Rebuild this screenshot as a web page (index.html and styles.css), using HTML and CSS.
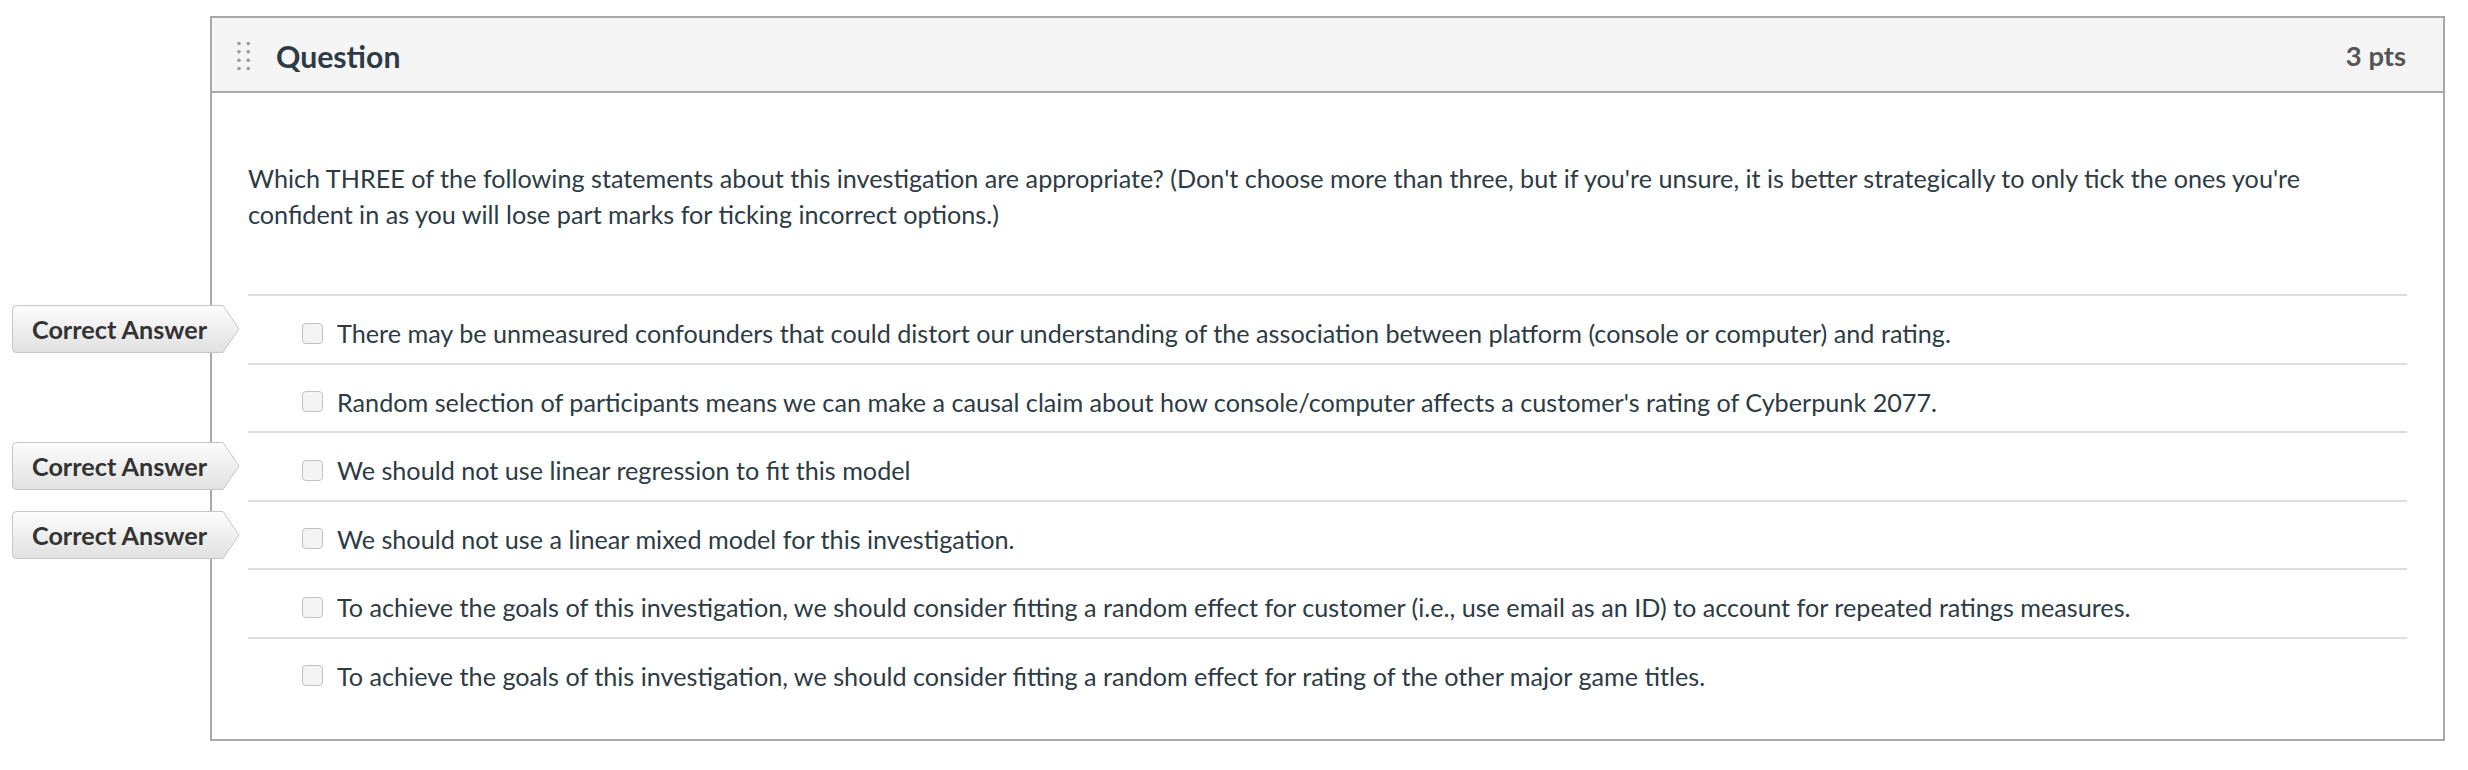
FILE: index.html
```html
<!DOCTYPE html>
<html lang="en">
<head>
<meta charset="utf-8">
<title>Question</title>
<link rel="stylesheet" href="styles.css">
</head>
<body>
<div class="page">
  <div class="question">
    <div class="q-header">
      <svg class="handle" width="16" height="32" viewBox="0 0 16 32" aria-hidden="true">
        <g fill="#9a9a9a">
          <circle cx="3" cy="3.5" r="1.8"/><circle cx="12.3" cy="3.5" r="1.8"/>
          <circle cx="3" cy="11.8" r="1.8"/><circle cx="12.3" cy="11.8" r="1.8"/>
          <circle cx="3" cy="20.2" r="1.8"/><circle cx="12.3" cy="20.2" r="1.8"/>
          <circle cx="3" cy="28.5" r="1.8"/><circle cx="12.3" cy="28.5" r="1.8"/>
        </g>
      </svg>
      <span class="q-title">Question</span>
      <span class="q-pts">3 pts</span>
    </div>
    <div class="q-body">
      <p class="q-text">Which THREE of the following statements about this investigation are appropriate? (Don't choose more than three, but if you're unsure, it is better strategically to only tick the ones you're confident in as you will lose part marks for ticking incorrect options.)</p>
      <div class="answers">
        <div class="answer">
          <span class="answer-arrow">
            <svg class="arrow-bg" width="228" height="48" viewBox="0 0 228 48" aria-hidden="true">
              <defs>
                <linearGradient id="ag1" x1="0" y1="0" x2="0" y2="1">
                  <stop offset="0" stop-color="#fdfdfd"/>
                  <stop offset="1" stop-color="#e1e1e1"/>
                </linearGradient>
              </defs>
              <path d="M4.5 0.5 H211 L227 24 L211 47.5 H4.5 Q0.5 47.5 0.5 43.5 V4.5 Q0.5 0.5 4.5 0.5 Z" fill="url(#ag1)" stroke="#c6c6c6"/>
            </svg>
            <span class="arrow-text">Correct Answer</span>
          </span>
          <span class="cb"></span>
          <span class="a-text">There may be unmeasured confounders that could distort our understanding of the association between platform (console or computer) and rating.</span>
        </div>
        <div class="answer">
          <span class="cb"></span>
          <span class="a-text">Random selection of participants means we can make a causal claim about how console/computer affects a customer's rating of Cyberpunk 2077.</span>
        </div>
        <div class="answer">
          <span class="answer-arrow">
            <svg class="arrow-bg" width="228" height="48" viewBox="0 0 228 48" aria-hidden="true">
              <path d="M4.5 0.5 H211 L227 24 L211 47.5 H4.5 Q0.5 47.5 0.5 43.5 V4.5 Q0.5 0.5 4.5 0.5 Z" fill="url(#ag1)" stroke="#c6c6c6"/>
            </svg>
            <span class="arrow-text">Correct Answer</span>
          </span>
          <span class="cb"></span>
          <span class="a-text">We should not use linear regression to fit this model</span>
        </div>
        <div class="answer">
          <span class="answer-arrow">
            <svg class="arrow-bg" width="228" height="48" viewBox="0 0 228 48" aria-hidden="true">
              <path d="M4.5 0.5 H211 L227 24 L211 47.5 H4.5 Q0.5 47.5 0.5 43.5 V4.5 Q0.5 0.5 4.5 0.5 Z" fill="url(#ag1)" stroke="#c6c6c6"/>
            </svg>
            <span class="arrow-text">Correct Answer</span>
          </span>
          <span class="cb"></span>
          <span class="a-text">We should not use a linear mixed model for this investigation.</span>
        </div>
        <div class="answer">
          <span class="cb"></span>
          <span class="a-text">To achieve the goals of this investigation, we should consider fitting a random effect for customer (i.e., use email as an ID) to account for repeated ratings measures.</span>
        </div>
        <div class="answer">
          <span class="cb"></span>
          <span class="a-text">To achieve the goals of this investigation, we should consider fitting a random effect for rating of the other major game titles.</span>
        </div>
      </div>
    </div>
  </div>
</div>
</body>
</html>
```

FILE: styles.css
```css
html, body {
  margin: 0;
  padding: 0;
  background: #ffffff;
}

body {
  font-family: "Lato", "Open Sans", "Liberation Sans", sans-serif;
  color: #2d3b45;
}

.page {
  padding: 16px 23px 0 210px;
}

.question {
  border: 2px solid #a9a9a9;
  background: #ffffff;
}

.q-header {
  display: flex;
  align-items: center;
  background: #f5f5f5;
  border-bottom: 2px solid #a9a9a9;
  padding: 20px 37px 17px 24px;
}

.handle {
  flex: none;
  margin-right: 24px;
}

.q-title {
  flex: 1;
  font-weight: 700;
  font-size: 30.2px;
  line-height: 36px;
  color: #2d3b45;
}

.q-pts {
  font-weight: 700;
  font-size: 27.4px;
  line-height: 36px;
  color: #555555;
}

.q-body {
  padding: 0 36px 34px;
}

.q-text {
  margin: 0;
  padding-top: 67px;
  font-size: 25.2px;
  line-height: 36px;
}

.answers {
  margin-top: 62px;
}

.answer {
  position: relative;
  display: flex;
  align-items: center;
  border-top: 2px solid #dedede;
  padding: 19px 0 11.5px 54px;
  font-size: 25.2px;
  line-height: 36px;
}

.cb {
  flex: none;
  width: 19px;
  height: 19px;
  border: 1.5px solid #c2c2c2;
  border-radius: 4px;
  background: #f4f4f4;
  margin-right: 14px;
}

.answer-arrow {
  position: absolute;
  left: -236px;
  top: 9px;
  width: 228px;
  height: 48px;
}

.arrow-bg {
  position: absolute;
  left: 0;
  top: 0;
}

.arrow-text {
  position: relative;
  display: block;
  padding-left: 20px;
  font-weight: 700;
  font-size: 25.2px;
  line-height: 48px;
  color: #333333;
}
```
